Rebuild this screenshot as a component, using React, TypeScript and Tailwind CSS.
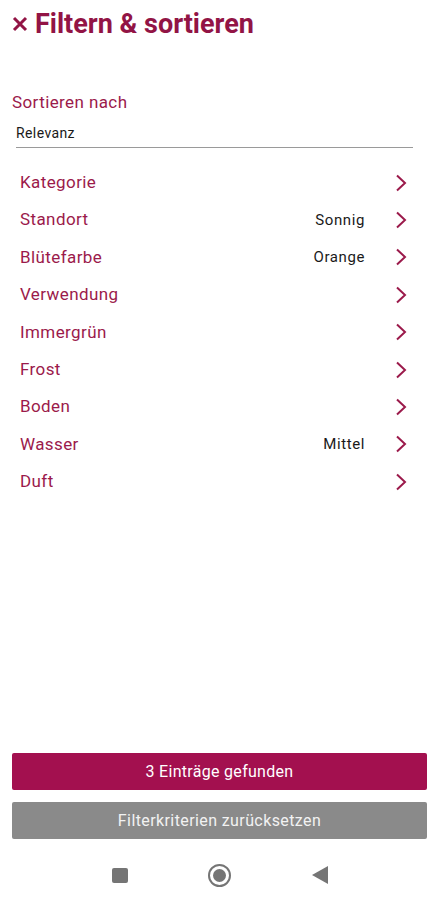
import React from 'react';

const BRAND = 'text-[#9b1a4b]';

const filters: { label: string; value?: string }[] = [
  { label: 'Kategorie' },
  { label: 'Standort', value: 'Sonnig' },
  { label: 'Blütefarbe', value: 'Orange' },
  { label: 'Verwendung' },
  { label: 'Immergrün' },
  { label: 'Frost' },
  { label: 'Boden' },
  { label: 'Wasser', value: 'Mittel' },
  { label: 'Duft' },
];

const Chevron = () => (
  <svg width="12" height="18" viewBox="0 0 12 18" className="shrink-0">
    <path d="M2 1.5 L10 9 L2 16.5" fill="none" stroke="#9b1a4b" strokeWidth="2" />
  </svg>
);

const App: React.FC = () => {
  return (
    <div className="w-[439px] h-[900px] bg-white flex flex-col font-['Roboto',sans-serif]">
      <div className="flex items-center gap-[7px] pl-[12px] pt-[9px] text-[#921445]">
        <svg width="16" height="16" viewBox="0 0 16 16" className="shrink-0">
          <path d="M2 2 L14 14 M14 2 L2 14" stroke="#921445" strokeWidth="3" strokeLinecap="butt" />
        </svg>
        <h1 className="text-[27px] font-bold leading-[30px]">Filtern &amp; sortieren</h1>
      </div>

      <div className="mt-[53px] px-[12px]">
        <p className={`text-[17px] leading-[20px] tracking-[0.4px] ${BRAND}`}>Sortieren nach</p>
        <div className="ml-[4px] mr-[14px] mt-[9px] border-b border-[#9a9a9a] pb-[2px]">
          <span className="text-[14px] leading-[16px] tracking-[0.4px] text-[#1a1a1a]">Relevanz</span>
        </div>
      </div>

      <ul className="mt-[16px] pl-[20px] pr-[32px]">
        {filters.map((f) => (
          <li key={f.label} className="flex items-center h-[37.4px]">
            <span className={`flex-1 text-[17px] tracking-[0.4px] ${BRAND}`}>{f.label}</span>
            {f.value && (
              <span className="text-[15px] tracking-[0.6px] text-[#1a1a1a] mr-[30px]">{f.value}</span>
            )}
            <Chevron />
          </li>
        ))}
      </ul>

      <div className="mt-auto px-[12px] flex flex-col gap-[12px]">
        <button className="h-[37px] rounded-[2px] bg-[#a3104f] text-white text-[16px] tracking-[0.3px]">
          3 Einträge gefunden
        </button>
        <button className="h-[37px] rounded-[2px] bg-[#8a8a8a] text-[#f2f2f2] text-[16px] tracking-[0.4px]">
          Filterkriterien zurücksetzen
        </button>
      </div>

      <div className="h-[61px] flex items-center justify-center gap-[76px] pt-[11px]">
        <div className="w-[24px] flex justify-center">
          <div className="w-[16px] h-[15px] rounded-[2px] bg-[#757575]" />
        </div>
        <div className="w-[24px] flex justify-center">
          <div className="w-[23px] h-[23px] rounded-full border-[2px] border-[#757575] flex items-center justify-center">
            <div className="w-[13px] h-[13px] rounded-full bg-[#757575]" />
          </div>
        </div>
        <div className="w-[24px] flex justify-center">
          <svg width="16" height="18" viewBox="0 0 16 18">
            <path d="M16 0 L16 18 L0 9 Z" fill="#757575" />
          </svg>
        </div>
      </div>
    </div>
  );
};

export default App;
